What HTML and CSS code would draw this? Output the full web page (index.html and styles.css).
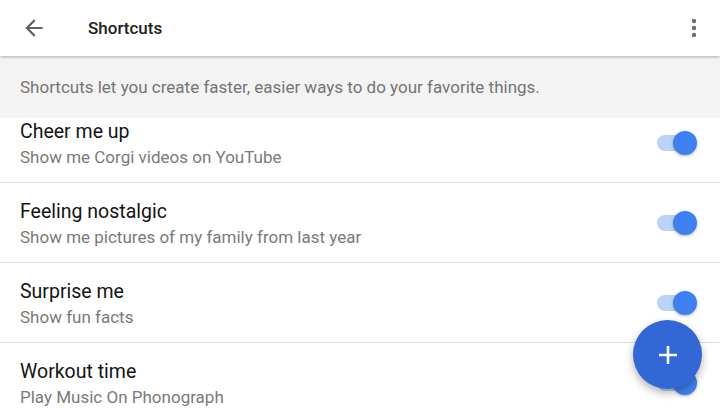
FILE: index.html
```html
<!DOCTYPE html>
<html lang="en">
<head>
    <meta charset="UTF-8">
    <title>Shortcuts</title>
    <link rel="stylesheet" href="styles.css">
</head>
<body>
<div class="screen">
    <header class="appbar">
        <svg class="back" viewBox="0 0 24 24" width="26" height="26">
            <path d="M20 11H7.83l5.59-5.59L12 4l-8 8 8 8 1.41-1.41L7.83 13H20v-2z"/>
        </svg>
        <h1 class="title">Shortcuts</h1>
        <svg class="more" viewBox="0 0 6 20" width="6" height="20">
            <circle cx="3" cy="3" r="2.2"/>
            <circle cx="3" cy="10" r="2.2"/>
            <circle cx="3" cy="17" r="2.2"/>
        </svg>
    </header>

    <p class="intro">Shortcuts let you create faster, easier ways to do your favorite things.</p>

    <div class="scroller">
        <ul class="list">
            <li class="row">
                <div class="text">
                    <div class="name">Cheer me up</div>
                    <div class="desc">Show me Corgi videos on YouTube</div>
                </div>
                <span class="switch"><span class="thumb"></span></span>
            </li>
            <li class="row">
                <div class="text">
                    <div class="name">Feeling nostalgic</div>
                    <div class="desc">Show me pictures of my family from last year</div>
                </div>
                <span class="switch"><span class="thumb"></span></span>
            </li>
            <li class="row">
                <div class="text">
                    <div class="name">Surprise me</div>
                    <div class="desc">Show fun facts</div>
                </div>
                <span class="switch"><span class="thumb"></span></span>
            </li>
            <li class="row">
                <div class="text">
                    <div class="name">Workout time</div>
                    <div class="desc">Play Music On Phonograph</div>
                </div>
                <span class="switch"><span class="thumb"></span></span>
            </li>
        </ul>
    </div>

    <button class="fab" aria-label="Add shortcut">
        <svg viewBox="0 0 20 20" width="20" height="20">
            <path d="M10 1v18M1 10h18" stroke="#fff" stroke-width="2.6"/>
        </svg>
    </button>
</div>
</body>
</html>
```

FILE: styles.css
```css
body {
    margin: 0;
    font-family: Roboto, "Noto Sans", Arial, sans-serif;
    background: #fff;
}

.screen {
    position: relative;
    width: 720px;
    height: 408px;
    overflow: hidden;
    display: flex;
    flex-direction: column;
}

.appbar {
    position: relative;
    z-index: 2;
    height: 56px;
    flex: none;
    display: flex;
    align-items: center;
    background: #fff;
    box-shadow: 0 1px 3px rgba(0, 0, 0, 0.28);
}

.back {
    fill: #616161;
    margin-left: 21px;
}

.title {
    margin: 0 0 0 41px;
    flex: 1;
    font-size: 17px;
    font-weight: 500;
    color: #212121;
}

.more {
    fill: #6e6e6e;
    margin-right: 23px;
}

.intro {
    margin: 0;
    height: 62px;
    flex: none;
    display: flex;
    align-items: center;
    padding: 0 20px;
    background: #f3f3f3;
    color: #757575;
    font-size: 17px;
}

.scroller {
    flex: 1;
    overflow: hidden;
}

.list {
    list-style: none;
    margin: -15px 0 0;
    padding: 0;
}

.row {
    height: 80px;
    box-sizing: border-box;
    display: flex;
    align-items: center;
    padding: 0 28px 0 20px;
    border-bottom: 1px solid #dcdcdc;
}

.text {
    flex: 1;
    align-self: flex-start;
    padding-top: 16px;
}

.name {
    font-size: 19.5px;
    line-height: 26px;
    color: #141414;
}

.desc {
    font-size: 17px;
    line-height: 24px;
    color: #7a7a7a;
}

.switch {
    position: relative;
    width: 35px;
    height: 16px;
    border-radius: 8px;
    background: #bcd3f8;
}

.thumb {
    position: absolute;
    right: -5px;
    top: -4px;
    width: 24px;
    height: 24px;
    border-radius: 50%;
    background: #3f80f0;
    box-shadow: 0 1px 3px rgba(0, 0, 0, 0.3);
}

.fab {
    position: absolute;
    left: 633px;
    top: 320px;
    width: 69px;
    height: 69px;
    border: none;
    border-radius: 50%;
    background: #3367d6;
    box-shadow: 0 4px 8px rgba(0, 0, 0, 0.3);
    display: flex;
    align-items: center;
    justify-content: center;
    padding: 0;
}
```
